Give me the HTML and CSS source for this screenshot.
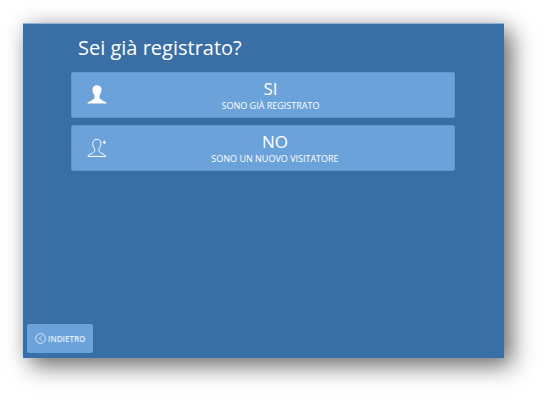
FILE: index.html
```html
<!DOCTYPE html>
<html lang="it">
<head>
  <meta charset="UTF-8" />
  <title>Sei già registrato?</title>
  <link rel="stylesheet" href="styles.css">
</head>
<body>
  <div class="panel">
    <div class="content">
      <h1>Sei già registrato?</h1>
      <div class="choice choice-yes">
        <svg class="choice-icon" viewBox="0 0 20 20">
          <path d="M10 .3C7.200.3 5.500 2 5.500 4.800c0 2.400.9 4 1.700 5 .5.700.5 2.700 0 3.700-.5 1-3.800 2.100-6 3.800-.5.4-.7.8-.9 1.200h19.400c-.2-.4-.4-.8-.9-1.200-2.200-1.700-5.500-2.800-6-3.800-.5-1-.5-3 0-3.700.8-1 1.700-2.600 1.700-5C14.500 2 12.800.3 10 .3z" fill="#fff"/>
        </svg>
        <div class="choice-text">
          <div class="choice-title">SI</div>
          <div class="choice-sub">SONO GIÀ REGISTRATO</div>
        </div>
      </div>
      <div class="choice choice-no">
        <svg class="choice-icon" viewBox="0 0 20 20">
          <path d="M9.700 1.300C7.300 1.300 5.700 3 5.700 5.500c0 2.200.8 3.700 1.600 4.700.5.700.5 2.600 0 3.500-.5 1-3.600 2-5.600 3.500-.4.300-.7.700-.9 1.200h18c-.2-.5-.5-.9-.9-1.200-2-1.500-5.100-2.500-5.600-3.500-.5-.9-.5-2.800 0-3.500.8-1 1.600-2.500 1.600-4.700 0-2.500-1.600-4.200-4.200-4.200z" fill="none" stroke="#fff" stroke-width="1"/>
          <path d="M17.300 2.500v3.400M15.600 4.200H19" stroke="#fff" stroke-width="1.100"/>
        </svg>
        <div class="choice-text">
          <div class="choice-title">NO</div>
          <div class="choice-sub">SONO UN NUOVO VISITATORE</div>
        </div>
      </div>
    </div>
    <div class="back">
      <svg class="back-icon" viewBox="0 0 12 12">
        <circle cx="6" cy="6" r="5.300" fill="none" stroke="#e3eef9" stroke-width="1"/>
        <path d="M7 3.800 4.800 6 7 8.200" fill="none" stroke="#e3eef9" stroke-width="1"/>
      </svg>
      <span>INDIETRO</span>
    </div>
  </div>
</body>
</html>
```

FILE: styles.css
```css
html, body {
  margin: 0;
  padding: 0;
  height: 100%;
  background: #fff;
  font-family: "Open Sans", sans-serif;
  overflow: hidden;
}

body {
  padding: 23px 0 0 23px;
  box-sizing: border-box;
}

.panel {
  display: flex;
  flex-direction: column;
  justify-content: space-between;
  width: 481px;
  height: 335px;
  padding: 0 4px 5px;
  box-sizing: border-box;
  background: #3a6fa5;
  border-top: 1px solid #8fb2d6;
  box-shadow: 8px 8px 22px rgba(0, 0, 0, 0.55), 0 0 16px rgba(0, 0, 0, 0.1);
  color: #fff;
}

.content {
  padding: 0 45px 0 44px;
}

h1 {
  margin: 0;
  padding: 10px 0 10px 7px;
  font-size: 20px;
  line-height: 28px;
  font-weight: 400;
}

.choice {
  display: flex;
  align-items: center;
  height: 46px;
  margin-bottom: 7px;
  box-sizing: border-box;
  background: #6ca2da;
  border: 1px solid #6198d1;
  border-radius: 2px;
}

.choice-icon {
  width: 20px;
  height: 20px;
  margin-left: 15px;
  flex-shrink: 0;
}

.choice-text {
  flex: 1;
  text-align: center;
}

.choice-yes .choice-text {
  padding-right: 20px;
}

.choice-no .choice-text {
  padding-right: 11px;
}

.choice-title {
  font-size: 17px;
  line-height: 21px;
}

.choice-sub {
  font-size: 9px;
  line-height: 13px;
}

.back {
  display: flex;
  align-items: center;
  gap: 2px;
  width: 66px;
  height: 29px;
  padding-left: 8px;
  box-sizing: border-box;
  background: #6ca2da;
  border-radius: 2px;
  color: #e3eef9;
  font-size: 8px;
  font-weight: 600;
}

.back-icon {
  width: 11px;
  height: 11px;
  flex-shrink: 0;
}
```
